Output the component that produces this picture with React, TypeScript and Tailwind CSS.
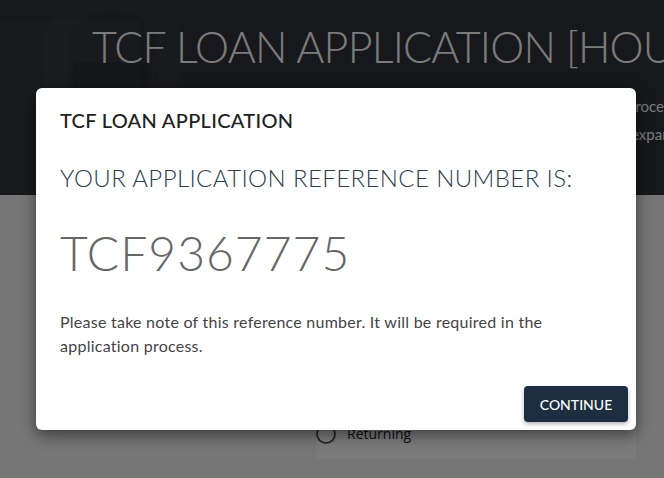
import React from "react"

const muli = { fontFamily: "Lato, 'Noto Sans', sans-serif" }

function PadlockArt() {
  return (
    <svg
      className="absolute left-0 top-0 h-[195px] w-[200px]"
      viewBox="0 0 200 195"
      fill="none"
    >
      <rect x="0" y="20" width="140" height="175" fill="#ffffff" fillOpacity="0.02" />
      <path
        d="M55 140 V55 Q55 0 112 0 Q170 0 170 55 V140"
        stroke="#ffffff"
        strokeOpacity="0.025"
        strokeWidth="24"
      />
      <rect x="73" y="62" width="75" height="133" fill="#000000" fillOpacity="0.1" />
    </svg>
  )
}

export default function App() {
  return (
    <div className="relative h-[478px] w-full overflow-hidden bg-[#ececec]" style={muli}>
      {/* Page header */}
      <div className="relative h-[195px] overflow-hidden bg-[#2f3037]">
        <PadlockArt />
        <div className="relative pl-[92px] pt-[19px]">
          <h1 className="whitespace-nowrap text-[43px] font-light leading-[56px] tracking-[-0.8px] text-[#f4f6f6]">
            TCF LOAN APPLICATION [HOUSING LOAN]
          </h1>
          <div className="mt-[17px] whitespace-nowrap text-[15px] leading-[28px] text-[#f2f2f2]">
            <p className="pl-[535px]">process of your loan</p>
            <p className="pl-[539px]">expand each section</p>
          </div>
        </div>
      </div>

      {/* Page body */}
      <div className="flex justify-end pr-[28px]">
        <div className="mt-[40px] flex h-[224px] w-[320px] flex-col justify-end bg-[#f7f7f7] pb-[15px]">
          <label
            className="flex items-center gap-[11px] text-[14px] text-[#222]"
            style={{ fontFamily: "'Open Sans', sans-serif" }}
          >
            <span className="h-[20px] w-[20px] rounded-full border-2 border-[#555] bg-white" />
            Returning
          </label>
        </div>
      </div>

      {/* Backdrop */}
      <div className="absolute inset-0 bg-black/50" />

      {/* Modal */}
      <div className="absolute left-[36px] top-[88px] flex w-[600px] flex-col rounded-[6px] bg-white shadow-[0_5px_15px_rgba(0,0,0,0.5)]">
        <div className="px-6 pt-[19px]">
          <h4 className="text-[20px] font-medium leading-[27px] tracking-[0.3px] text-[#222]">
            TCF LOAN APPLICATION
          </h4>
          <h3 className="mt-[28px] text-[24px] font-light leading-[32px] tracking-[0.4px] text-[#2c3e50]">
            YOUR APPLICATION REFERENCE NUMBER IS:
          </h3>
          <p className="mt-[29px] text-[48px] font-light leading-[60px] tracking-[1px] text-[#666]">
            TCF9367775
          </p>
          <p className="mt-[27px] text-[16px] leading-6 tracking-[0.25px] text-[#444]">
            Please take note of this reference number. It will be required in the
            application process.
          </p>
        </div>
        <div className="mt-[28px] flex justify-end p-2 pt-0">
          <button className="h-[36px] w-[104px] rounded-[4px] bg-[#1c2e40] text-[14px] font-medium text-white shadow-[0_2px_4px_rgba(0,0,0,0.3)]">
            CONTINUE
          </button>
        </div>
      </div>
    </div>
  )
}
